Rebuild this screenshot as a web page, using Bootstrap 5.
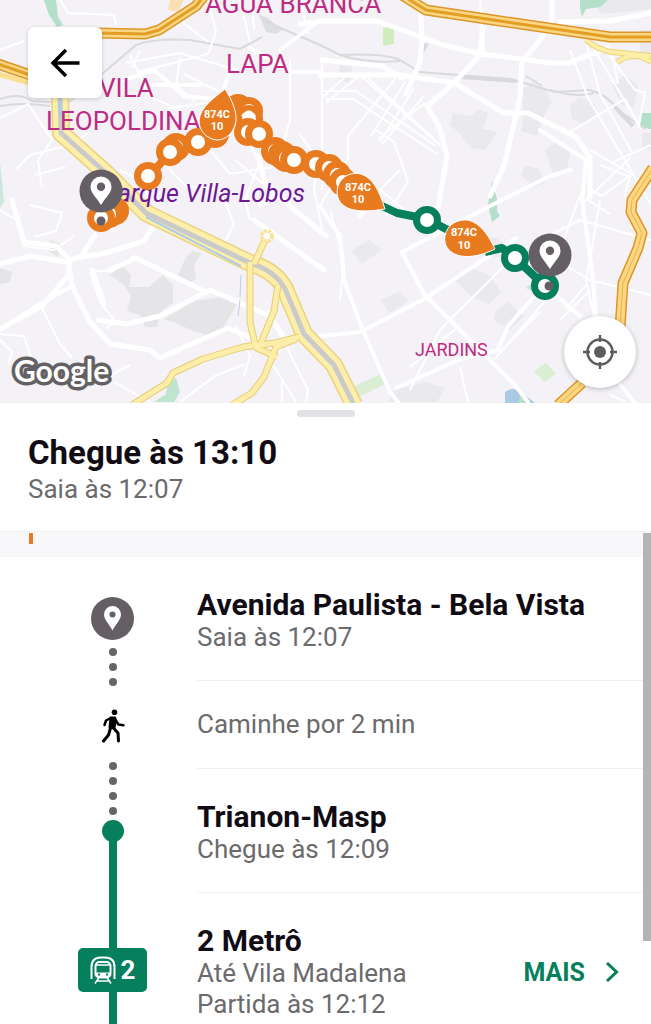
<!DOCTYPE html>
<html lang="pt-BR">
<head>
<meta charset="utf-8">
<meta name="viewport" content="width=device-width, initial-scale=1">
<title>Rota</title>
<link href="https://cdn.jsdelivr.net/npm/bootstrap@5.3.0/dist/css/bootstrap.min.css" rel="stylesheet">
<style>
  :root { --ink: #110b14; --muted: #6b6a6d; --metro: #067f5c; --bus: #e87b20; --pin: #655f65; }
  body { font-family: Roboto, "Liberation Sans", sans-serif; color: var(--ink); background: #fff; }
  .city-map { background: #f3f2f6; }
  .city-map > svg { display: block; width: 100%; height: auto; }
  .back-btn { top: 27px; left: 28px; width: 74px; height: 71px; border-radius: 6px; box-shadow: 0 1px 4px rgba(0,0,0,.18); }
  .locate-btn { right: 15px; bottom: 15px; width: 72px; height: 72px; box-shadow: 0 1px 5px rgba(0,0,0,.25); }
  .grabber { width: 58px; height: 7px; background: #e2e1e5; }
  .sheet-head { padding: 7px 28px 26px; border-bottom: 1px solid #efeef1; }
  .head-title { font-size: 33px; line-height: 40px; font-weight: 700; margin: 16px 0 0; }
  .line-sub { font-size: 26px; line-height: 31px; color: var(--muted); margin: 0; }
  .sheet-head .line-sub { padding-top: 1px; }
  .line-title { font-size: 30px; line-height: 34px; font-weight: 700; margin: 0; }
  .band { height: 25px; padding: 1px 29px 0; background: #f8f7fa; }
  .band-mark { width: 4px; height: 11px; background: var(--bus); }
  .track { width: 197px; padding: 40px 0 0 28px; flex: none; }
  .dot-run { gap: 7px; }
  .dot-run i { width: 8px; height: 8px; border-radius: 50%; background: #676467; }
  .walker { margin: 23px 0 19px; }
  .stop-dot { width: 22px; height: 22px; margin-top: 5px; border-radius: 50%; background: var(--metro); }
  .metro-line { width: 8px; background: var(--metro); }
  .metro-first { height: 107px; margin-top: -1px; }
  .line-tag { width: 69px; height: 44px; border-radius: 5px; background: var(--metro); font-size: 26px; font-weight: 700; gap: 5px; }
  .steps > li { border-bottom: 1px solid #efeef1; }
  .steps > li:last-child { border-bottom: 0; }
  .step-stop { height: 124px; padding-top: 31px; }
  .step-walk { height: 88px; }
  .step-ride { padding: 31px 32px 4px 0; }
  .more-link { font-size: 25px; line-height: 31px; font-weight: 700; color: var(--metro); gap: 20px; }
  .scroll-thumb { right: 0; top: 1px; width: 8px; height: 408px; background: #b5b4b5; }
  .place { font-family: Roboto, sans-serif; fill: #bd2c83; }
</style>
</head>
<body>
<main class="min-vh-100 d-flex flex-column overflow-hidden">
  <section class="city-map position-relative">
    <svg viewBox="0 0 651 403" role="img" aria-label="Mapa da rota">
      <defs>
        <g id="orange-stop"><circle r="10.5" fill="#fff" stroke="#e87b20" stroke-width="7"/></g>
        <g id="green-stop"><circle r="10.5" fill="#fff" stroke="#067f5c" stroke-width="7"/></g>
        <g id="map-pin"><circle r="21.5" fill="#655f65"/><path fill="#fff" fill-rule="evenodd" d="M0 14C-4 7-10.500 2-10.500-4a10.500 10.500 0 0 1 21 0C10.500 2 4 7 0 14zM0-8.500a4.200 4.200 0 1 0 0 8.400a4.200 4.200 0 0 0 0-8.400z"/></g>
      </defs>
      <rect width="651" height="403" fill="#f4f2f6"/>
      <!-- built areas -->
      <g fill="#e5e5e7">
        <path d="M110 275l12-10 9 10-2 12 20 0 14-12 10 10v18l-12 8-4 16h-12l-5-12-13-4 4-15-8-12z"/>
        <path d="M164 319l30-18 28-4 16 5-8 14-8 14-15 5-14-4-15-7z"/>
        <path d="M178 275l7-16 7-8 10 2-8 12 2 14-8 4zM0 268l12 4-2 10-10 2zM50 240l12 5-4 12-10-6z"/>
      </g>
      <g fill="#eae9ed">
        <path d="M453 113l18 3 7-7 10 4-5 16 14 3-12 18-14-2-12-15-9-8z"/>
        <path d="M520 92l12-10 14 8 6 12-8 14-7 20-16-5 3-18zM570 105l10-8 14 6 4 12-14 10-12-6zM545 150l14-10 12 8-4 22-14 5zM612 85l12-10 14 10-4 22-12-2zM525 165l14 4 6 14-10 4-14-12zM340 65l12 2-2 16-12-4zM590 0h61v9l-50 5z"/>
        <path d="M351 251l18-11 13 10-20 14zM380 300l20-9 8 10-18 12zM455 280l16-12 20 8 10 16-12 12-16-6zM496 310l12-8 16 14-14 14-16-10zM470 245l25-8 14 10-8 10-20-1zM528 272l14-10 14 14-10 12-14-6zM395 390l30-8 20 6-8 14h-50zM640 30h11v30l-11-6zM642 133h9v16h-9z"/>
      </g>
      <g>
        <path d="M383 28l11-2v18l-11 2z" fill="#d2edbd"/><path d="M420 42l9 2-6 10z" fill="#d8dadb"/>
        <path d="M44 0h12l2 17 5 8-6 2-8-12z" fill="#b4dfcb"/><path d="M580 0h28l-8 7-14 2-4 8-2-9z" fill="#b4dfcb"/>
        <path d="M488 205l4-24 5 18v12l3 5-8 6z" fill="#b4dfcb"/><path d="M642 113h9v16l-12-2z" fill="#b4dfcb"/>
        <path d="M168 382l8-4 4 14-6 10h-20l12-8z" fill="#bfe5d0"/><path d="M355 386l28-13 2 11-28 14z" fill="#d9eed3"/>
        <path d="M534 371l12-8 10 11-12 8z" fill="#d9eed3"/><path d="M505 392q8-6 16 0l14 11h-30z" fill="#a9c9e4"/>
        <path d="M520 396l12 7h-14z" fill="#b4dfcb"/><path d="M0 162l4 40-4 6z" fill="#cbe7da"/>
        <path d="M170 0h14l-6 12-10-2z" fill="#fbe0b4"/><path d="M258 14l10 4 14 12-6 4-10-2-4-10z" fill="#dddedf"/>
        <path d="M526 288l6-5 5 10z" fill="#c6e5d8"/>
      </g>
      <!-- railway -->
      <g fill="none" stroke="#d9dadc">
        <path stroke-width="2" d="M0 99Q20 92 32 101L68 103 136 45Q155 38 190 40L240 49 262 37M262 20L320 45 340 55Q380 53 398 59L420 72 510 79 555 92 590 90Q608 95 618 110L645 129"/>
        <path stroke-width="2" d="M340 55Q370 64 400 61M526 76l16 10M550 90q26 8 44 3"/>
        <path stroke-width="4" d="M460 77L516 81M615 107l18 19"/>
        <path stroke-width="2" d="M0 106q20-4 50 0"/>
      </g>
      <!-- minor streets -->
      <g fill="none" stroke="#fff" stroke-width="2">
        <path d="M0 50l24-9M60 0l8 13 46 2 2 10M125 63l55-10 60 18M130 55l20 42 32 14M180 58l-4 28 20 16M180 20l28 22M208 0l8 32-8 22-70 18M240 0l10 42M184 74l40 20M168 108l40-5M140 50l-8 18M30 155l40-10 18-12M0 118l28-14 24 36-14 20 4 28M30 155l-14 14M35 175l30-8M70 145l-22-24"/>
        <path d="M290 60v60l-8 28M320 75h40l80 70M320 91h36l80 55M325 99h28l84 55M396 78l-48 58v22l-28 48M405 82l-34 54M414 88l-34 54M424 96l-42 48M425 103l-48 37M376 130l18 12 10 28 4 12-22 34M400 170l-20 20 30 24M350 72l-28 26M360 75l-34 28M368 78l65 60M322 60v130M252 0l2 30"/>
        <path d="M300 0l8 34M420 0l3 36M480 0l2 28M586 42l14 52 32 58M590 42l50 85M605 50l30 40 10 3-6 32M565 135l60-36 15 30M612 54l6 30M570 50l18 48 65 110M590 150l42 24-30 22-12-6M600 165l30 12-6 20M590 165l-2 35 22 14M630 158l-46 44M651 145l-40 18"/>
        <path d="M300 135l18 24-4 30 8 40M245 130l14 34-14 36 5 20M160 160l26 26 34 4 14 34-10 20M235 160l40 34M210 150l20 24 50-8M120 170l24 12 8 35"/>
        <path d="M0 210l20 12 4 24 30 4 20-14M30 205l32 8-6 18-22 6M0 340l12 12-4 12M42 308l18 36 12 14M0 334l24 2 10 32 20 12M90 272l10 30 16 20-10 6M90 272l24-2 20-14M130 365l-30 16M150 402l-36-20M180 402l35-26 30-12M236 326l14 30-6 20M268 310l40 80-2 12M270 360l26 42M282 380v22"/>
        <path d="M330 210l14 50-4 40M520 250l-80 80-30 60M460 325l-50 42M546 300l-52 60M600 200l-10 60-4 20 10 45M560 320l30-30M540 250l50 30 61 15M586 285l-20 24M540 240l40-20 71 20M610 395l16 7M460 367l8 35M500 352l40-40M580 195l-16 45-20 6"/>
      </g>
      <!-- main streets -->
      <g fill="none" stroke="#fff" stroke-width="5" stroke-linejoin="round" stroke-linecap="round">
        <path d="M300 24l22-3 55 0 66 24 40 9 68 9h18l40-16M552 0v20l-12 20-18 22-2 36-16 68-14 30M483 28l-4 28-26 28-26 22 12 20 8 30-14 80M482 28v26M420 0l2 40-2 22-14 32M320 75h80l54 8 50 30h24l48 24 14 20v40M560 22l50-1 41-8M322 60l60 6 20 12M380 195l-20 20"/>
        <path stroke-width="4" d="M224 100l-40-4-30-26-30 10M224 105l-10 30-30 20M200 85l-46 0M231 65l-12 40M250 48l40 24h30M320 20l-40 30"/>
        <path d="M0 264l30-8 36 6 10-4 30-5 38-12 10-16M12 200l12 42 32 4 14 14-2 16-26 30-40 22M68 262l4 24 18 36 20 22 40 6 10 8 68-30 52 22M95 235l-14 22M98 320l28 4 34-8 50-26 60 26 14 22M110 270l26-12 70 34M92 270l12 34M282 160l-24-4 8 30 60 50M254 220l70 50M260 205l14-8"/>
        <path d="M0 330l40-26 32-18" stroke-width="4"/>
        <path d="M402 252l88-46 60-30 20-6M402 252l22 42 40 40 50 50 14 18M320 336l40-4 66-34 90-60M320 206l20 30 4 44 18 48 28 64 8 10M396 388l62-28 40-10 10-24 30-34M540 282l40 34M540 130l46 30-4 40 10 70 4 50M620 384l14 18" stroke-width="4"/>
      </g>
      <!-- riverside expressways -->
      <g fill="none" stroke-linejoin="round">
        <path d="M60 95l1 38 45 40 40 40 104 50Q280 272 288 296L304 334 334 365 354 405" stroke="#e9d27f" stroke-width="18"/>
        <path d="M60 95l1 38 45 40 40 40 104 50Q280 272 288 296L304 334 334 365 354 405" stroke="#fdeeaa" stroke-width="15"/>
        <path d="M60 95l1 38 45 40 40 40 104 50Q280 272 288 296L304 334 334 365 354 405" stroke="#c9cac9" stroke-width="5"/>
        <path d="M146 217l95 49" stroke="#aecbe8" stroke-width="2"/>
        <path d="M60 98v18" stroke="#aecbe8" stroke-width="3"/>
        <path d="M241 275l-1 22M240 300l-2 16" stroke="#bcd0ea" stroke-width="1"/>
        <path d="M250 262v60l5 22M278 285l-4 26-13 32M266 238l-12 26M132 405l35-22 6-10 30-14 40-12 32-4 24-6M232 405l20-12 12-16 12-30 20-8M255 347l22 10" stroke="#e6cd75" stroke-width="7"/>
        <path d="M250 262v60l5 22M278 285l-4 26-13 32M266 238l-12 26M132 405l35-22 6-10 30-14 40-12 32-4 24-6M232 405l20-12 12-16 12-30 20-8M255 347l22 10" stroke="#fceda8" stroke-width="5"/>
        <circle cx="267" cy="236" r="5" fill="#fff" stroke="#f7e49a" stroke-width="4" stroke-dasharray="3 1"/>
        <path d="M586 40q12 10 26 12l39 4M651 62q-16-12-34 0" stroke="#e9d27f" stroke-width="6"/>
        <path d="M586 40q12 10 26 12l39 4M651 62q-16-12-34 0" stroke="#fdeea6" stroke-width="4"/>
      </g>
      <g fill="none" stroke-linejoin="round">
        <path d="M-2 64L30 75M95 33l50 1 14-4L196 6l8-10M402-5l24 15 74 11 110 16h45M653 168l-21 32-1 12 11 21-4 15-15 35-4 60M582 383l-24 22" stroke="#dc9627" stroke-width="11"/>
        <path d="M-2 64L30 75M95 33l50 1 14-4L196 6l8-10M402-5l24 15 74 11 110 16h45M653 168l-21 32-1 12 11 21-4 15-15 35-4 60M582 383l-24 22" stroke="#fcd783" stroke-width="8"/>
        <path d="M-2 64L30 75M95 33l50 1 14-4L196 6l8-10M402-5l24 15 74 11 110 16h45" stroke="#e39e25" stroke-width="3"/>
        <path d="M653 168l-21 32-1 12 11 21-4 15-15 35-4 60M582 383l-24 22" stroke="#e9b04a" stroke-width="1"/>
        <path d="M-2 74L30 83" stroke="#fbdf8e" stroke-width="5"/>
      </g>
      <!-- place names -->
      <g class="place">
        <text x="205" y="13" font-size="26">ÁGUA BRANCA</text>
        <text x="226" y="73" font-size="26">LAPA</text>
        <text x="99" y="97" font-size="26">VILA</text>
        <text x="46" y="130" font-size="26">LEOPOLDINA</text>
        <text x="415" y="356" font-size="18">JARDINS</text>
        <text x="305" y="202" font-size="25" font-style="italic" text-anchor="end" style="fill:#6c1795">Parque Villa-Lobos</text>
      </g>
      <text x="14" y="382" font-family="Lato, sans-serif" font-size="30" font-weight="700" fill="#fff" stroke="#636164" stroke-width="7" stroke-linejoin="round" style="paint-order:stroke">Google</text>
      <!-- route -->
      <path d="M148 177L171 152 198 142 222 132M240 108l19 26 35 26 23 4 25 18" fill="none" stroke="#e87b20" stroke-width="8"/>
      <path d="M380 205l17 8 30 6 38 20M485 252l17-4 13 10 30 28" fill="none" stroke="#067f5c" stroke-width="8" stroke-linejoin="round"/>
      <use href="#orange-stop" x="115" y="211"/><use href="#orange-stop" x="109" y="214"/><use href="#orange-stop" x="101" y="218"/>
      <use href="#orange-stop" x="148" y="176"/><use href="#orange-stop" x="176" y="147"/><use href="#orange-stop" x="170" y="152"/>
      <circle cx="215" cy="134" r="14" fill="#e87b20"/><use href="#orange-stop" x="198" y="142"/>
      <circle cx="238" cy="108" r="14" fill="#e87b20"/><use href="#orange-stop" x="249" y="111"/><use href="#orange-stop" x="249" y="119"/>
      <use href="#orange-stop" x="248" y="132"/><use href="#orange-stop" x="259" y="134"/>
      <path d="M241 116q8-11 15 0l-7 2z" fill="#fff"/>
      <use href="#orange-stop" x="275" y="151"/><use href="#orange-stop" x="282" y="155"/><use href="#orange-stop" x="286" y="158"/><use href="#orange-stop" x="294" y="160"/>
      <use href="#orange-stop" x="316" y="164"/><use href="#orange-stop" x="329" y="168"/><use href="#orange-stop" x="337" y="175"/><use href="#orange-stop" x="343" y="182"/>
      <use href="#green-stop" x="427" y="220"/><use href="#green-stop" x="515" y="258"/><use href="#green-stop" x="545" y="286"/>
      <g fill="#e87b20" stroke="#fff" stroke-width="1">
        <path d="M225 89C232 100 237 112 236 121C234 133 226 140 217 140C206 139 199 130 199 121C200 107 214 98 225 89z"/>
        <path d="M385 209C373 211 360 212 350 209C339 205 335 196 338 186C342 175 352 172 361 174C373 178 379 190 385 209z"/>
        <path d="M495 249C485 254 472 258 461 256C450 254 443 246 445 236C447 224 458 219 468 220C480 223 488 234 495 249z"/>
      </g>
      <g fill="#fff" font-family="Roboto, sans-serif" font-size="11" font-weight="700" text-anchor="middle">
        <text x="217" y="118">874C</text><text x="217" y="130">10</text>
        <text x="358" y="191">874C</text><text x="358" y="203">10</text>
        <text x="464" y="236">874C</text><text x="464" y="249">10</text>
      </g>
      <circle cx="101" cy="221" r="4.500" fill="#655f65"/><circle cx="549" cy="286" r="4.500" fill="#655f65"/>
      <use href="#map-pin" x="101" y="191"/><use href="#map-pin" x="550" y="255"/>
    </svg>
    <button type="button" class="back-btn btn p-0 bg-white border-0 position-absolute d-flex align-items-center justify-content-center" aria-label="Voltar">
      <svg width="30" height="30" viewBox="0 0 30 30" fill="none" stroke="#000" stroke-width="3.500"><path d="M29.500 15H3M16 2L3 15l13 13"/></svg>
    </button>
    <button type="button" class="locate-btn btn p-0 bg-white border-0 rounded-circle position-absolute d-flex align-items-center justify-content-center" aria-label="Minha localização">
      <svg width="34" height="34" viewBox="0 0 34 34" fill="none" stroke="#5e5c5f" stroke-width="2.500"><circle cx="17" cy="17" r="12.500"/><circle cx="17" cy="17" r="6" fill="#5e5c5f" stroke="none"/><path d="M17 0v7M17 27v7M0 17h7M27 17h7"/></svg>
    </button>
  </section>

  <header class="sheet-head">
    <div class="grabber rounded-pill mx-auto"></div>
    <h1 class="head-title">Chegue às 13:10</h1>
    <p class="line-sub">Saia às 12:07</p>
  </header>

  <section class="position-relative flex-grow-1 d-flex flex-column">
    <div class="band"><div class="band-mark"></div></div>
    <div class="d-flex flex-grow-1">
      <div class="track d-flex flex-column align-items-center" aria-hidden="true">
        <svg width="43" height="43" viewBox="-21.500 -21.500 43 43"><circle r="21.500" fill="#655f65"/><path fill="#fff" fill-rule="evenodd" d="M0 12C-3 6-8.500 1-8.500-4a8.500 8.500 0 0 1 17 0C8.500 1 3 6 0 12zM0-7a3 3 0 1 0 0 6a3 3 0 0 0 0-6z"/></svg>
        <div class="dot-run d-flex flex-column mt-2"><i></i><i></i><i></i></div>
        <svg class="walker" width="24" height="34" viewBox="0 0 24 34" fill="none" stroke="#000" stroke-linecap="round" stroke-linejoin="round"><circle cx="13.500" cy="3.200" r="2.800" fill="#000" stroke="none"/><path stroke-width="2.500" d="M10 9L5 11.500 3.500 16M14.500 11l3 4.500 5 .7"/><path fill="#000" stroke-width="2" d="M9.500 8.500l4.500 0 1 3-1.500 7-5 0z"/><path stroke-width="3" d="M9.500 19L7.500 26 2.500 32M12 18.500l5 5.500.5 8"/></svg>
        <div class="dot-run d-flex flex-column"><i></i><i></i><i></i><i></i></div>
        <div class="stop-dot"></div>
        <div class="metro-line metro-first"></div>
        <div class="line-tag text-white d-flex align-items-center justify-content-center">
          <svg width="26" height="28" viewBox="0 0 26 28" fill="none" stroke="#fff" stroke-width="2"><path d="M1.500 23V11Q1.500 1.500 11 1.500h4Q24.500 1.500 24.500 11V23"/><rect x="5.500" y="6" width="15" height="15.500" rx="4"/><path d="M6 9h14" stroke-width="1.500"/><path d="M6 17h14v2.500l-2 2h-10l-2-2z" fill="#fff" stroke-width="1"/><path d="M8 18.500h2M16 18.500h2" stroke="#067f5c"/><path stroke-width="1.500" d="M9 21.500l-4 6M17 21.500l4 6M7 25h12"/></svg>
          <span>2</span>
        </div>
        <div class="metro-line flex-grow-1"></div>
      </div>
      <ol class="steps list-unstyled flex-grow-1 mb-0">
        <li class="step-stop"><h2 class="line-title">Avenida Paulista - Bela Vista</h2><p class="line-sub">Saia às 12:07</p></li>
        <li class="step-walk d-flex align-items-center"><p class="line-sub">Caminhe por 2 min</p></li>
        <li class="step-stop"><h2 class="line-title">Trianon-Masp</h2><p class="line-sub">Chegue às 12:09</p></li>
        <li class="step-ride d-flex align-items-center justify-content-between">
          <div><h2 class="line-title">2 Metrô</h2><p class="line-sub">Até Vila Madalena</p><p class="line-sub">Partida às 12:12</p></div>
          <a href="#" class="more-link d-flex align-items-center text-decoration-none">MAIS
            <svg width="14" height="20" viewBox="0 0 14 20" fill="none" stroke="currentColor" stroke-width="3"><path d="M2 1l9.500 9L2 19"/></svg></a>
        </li>
      </ol>
    </div>
    <div class="scroll-thumb position-absolute"></div>
  </section>
</main>
<script src="https://cdn.jsdelivr.net/npm/bootstrap@5.3.0/dist/js/bootstrap.bundle.min.js"></script>
</body>
</html>
